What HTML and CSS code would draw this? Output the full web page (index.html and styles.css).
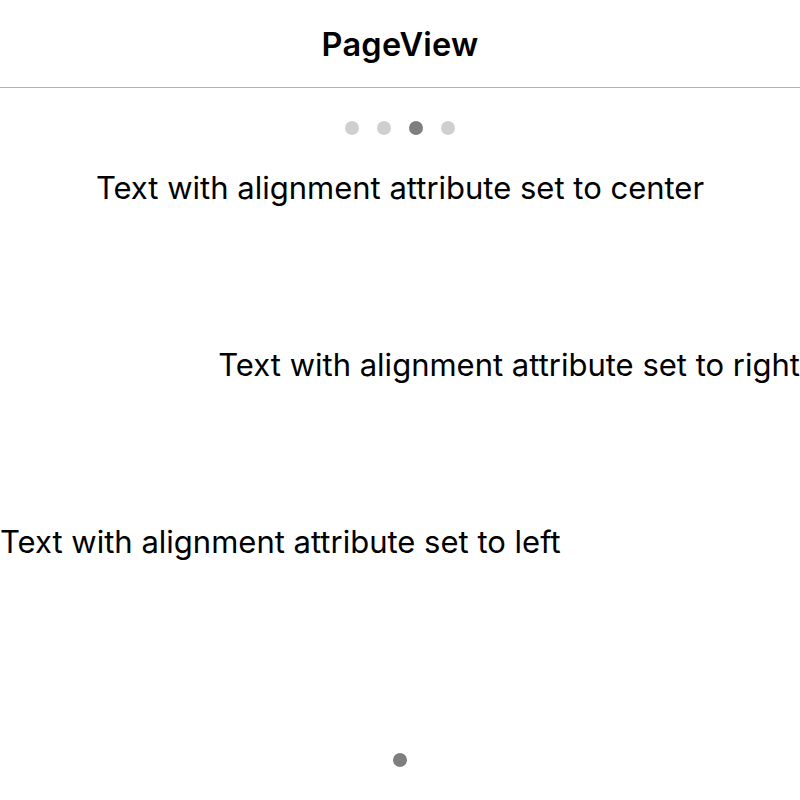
FILE: index.html
```html
<!DOCTYPE html>
<html>
<head>
<meta charset="utf-8">
<link rel="stylesheet" href="styles.css">
</head>
<body>
<div class="screen">
  <header class="nav"><h1 class="title">PageView</h1></header>
  <div class="dots">
    <span class="dot"></span>
    <span class="dot"></span>
    <span class="dot active"></span>
    <span class="dot"></span>
  </div>
  <div class="rows">
    <p class="row center">Text with alignment attribute set to center</p>
    <p class="row right">Text with alignment attribute set to right</p>
    <p class="row left">Text with alignment attribute set to left</p>
  </div>
  <div class="bottom"><span class="dot active"></span></div>
</div>
</body>
</html>
```
FILE: styles.css
```css
html, body { margin: 0; padding: 0; background: #fff; }
body { font-family: Inter, "Noto Sans", sans-serif; color: #000; }
.screen { width: 800px; height: 800px; display: flex; flex-direction: column; }
.nav { height: 88px; border-bottom: 1px solid #b2b2b2; display: flex; align-items: center; justify-content: center; box-sizing: border-box; }
.title { margin: 0; font-size: 32.5px; font-weight: 600; letter-spacing: 0.2px; padding-top: 1px; }
.dots { display: flex; justify-content: center; gap: 18px; margin-top: 33px; height: 14px; }
.dot { width: 14px; height: 14px; border-radius: 50%; background: #cfcfcf; display: block; }
.dot.active { background: #7f7f7f; }
.rows { display: flex; flex-direction: column; margin-top: 35px; }
.row { margin: 0; font-size: 31px; line-height: 36px; height: 177px; }
.center { text-align: center; }
.right { text-align: right; }
.left { text-align: left; }
.bottom { display: flex; justify-content: center; margin-top: auto; margin-bottom: 33px; }
```
